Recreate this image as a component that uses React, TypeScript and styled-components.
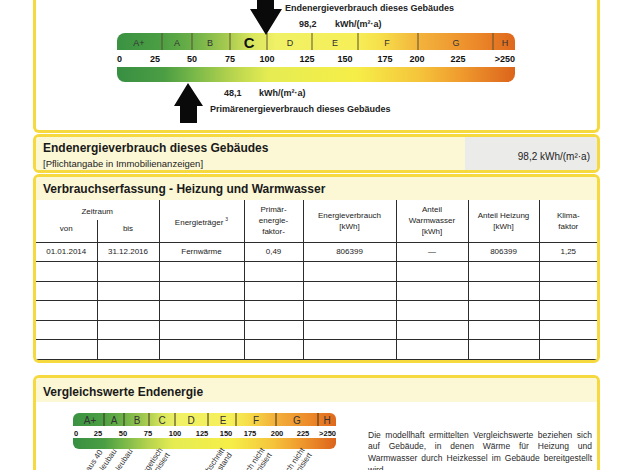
import React from "react";
import styled, { createGlobalStyle } from "styled-components";

const GlobalStyle = createGlobalStyle`
  html, body {
    margin: 0;
    padding: 0;
    width: 626px;
    height: 470px;
    overflow: hidden;
    background: #ffffff;
  }
  body {
    font-family: "Liberation Sans", Arial, Helvetica, sans-serif;
    color: #1e1e1e;
  }
`;

const YELLOW = "#f6d93e";
const CREAM = "#fcf8d6";
const LINE = "#2c2c2c";

const Page = styled.div`
  width: 567px;
  margin-left: 33px;
  display: flex;
  flex-direction: column;
`;

const Panel = styled.section<{ $open?: boolean; $gap?: number }>`
  border: 3px solid ${YELLOW};
  border-top-width: ${(p) => (p.$open ? 0 : 3)}px;
  border-radius: ${(p) => (p.$open ? "0 0 6px 6px" : "6px")};
  margin-top: ${(p) => p.$gap ?? 1}px;
  overflow: hidden;
  background: #ffffff;
`;

const ChartSvg = styled.svg`
  display: block;
  font-family: "Liberation Sans", Arial, Helvetica, sans-serif;
`;

const PanelHeader = styled.header<{ $padTop?: number }>`
  height: ${(p) => 23 - (p.$padTop ?? 0) + (p.$padTop ? 1 : 0)}px;
  padding-top: ${(p) => p.$padTop ?? 0}px;
  background: ${CREAM};
  display: flex;
  align-items: center;
  padding-left: 7px;
`;

const Title = styled.h2`
  margin: 0;
  font-size: 12px;
  line-height: 14px;
  font-weight: bold;
  color: #1a1a1a;
`;

const SummaryRow = styled.div`
  display: flex;
  height: 33px;
`;

const SummaryText = styled.div`
  flex: 1;
  background: ${CREAM};
  padding: 4px 7px 0;
  display: flex;
  flex-direction: column;
  gap: 3px;
`;

const Note = styled.div`
  font-size: 9.5px;
  line-height: 12px;
  color: #222;
`;

const SummaryValue = styled.div`
  width: 132px;
  background: #ebebea;
  display: flex;
  align-items: center;
  justify-content: flex-end;
  padding: 5px 7px 0 0;
  box-sizing: border-box;
  font-size: 10px;
  color: #222;
`;

const Table = styled.table`
  width: 561px;
  border-collapse: collapse;
  table-layout: fixed;
  font-size: 8px;
  line-height: 11px;
  color: #222;
`;

const Col = styled.col<{ $w: number }>`
  width: ${(p) => p.$w}px;
`;

const Th = styled.th<{ $open?: boolean; $top?: number; $first?: boolean }>`
  font-weight: normal;
  text-align: center;
  vertical-align: ${(p) => (p.$top !== undefined ? "top" : "middle")};
  padding: ${(p) => (p.$top !== undefined ? `${p.$top}px 2px 0` : "0 2px")};
  border-left: ${(p) => (p.$first ? "none" : `1px solid ${LINE}`)};
  border-bottom: ${(p) => (p.$open ? "none" : `1px solid ${LINE}`)};
`;

const HeadRow = styled.tr<{ $h: number }>`
  height: ${(p) => p.$h}px;
`;

const BodyRow = styled.tr`
  height: 19.5px;
`;

const Td = styled.td<{ $first?: boolean }>`
  text-align: center;
  vertical-align: middle;
  padding: 0 2px;
  border-left: ${(p) => (p.$first ? "none" : `1px solid ${LINE}`)};
  border-bottom: 1px solid ${LINE};
`;

const Sup = styled.sup`
  font-size: 5px;
  vertical-align: 4px;
  margin-left: 2px;
`;

const CompareBody = styled.div`
  display: flex;
  height: 80px;
`;

const Paragraph = styled.p`
  margin: 0 0 0 18px;
  padding-top: 28px;
  width: 224px;
  font-size: 8.5px;
  line-height: 11.7px;
  text-align: justify;
  color: #2a2a2a;
`;

/* ---------- energy scale drawing ---------- */

type ScaleProps = {
  id: string;
  x0: number;
  x1: number;
  barY: number;
  barH: number;
  lowY: number;
  lowH: number;
  r: number;
  dividers: number[];
  divColor: string;
  letters: [string, number][];
  big?: string;
  letterY: number;
  letterSize: number;
  numbers: [string, number][];
  numY: number;
  numSize: number;
};

const topStops: [number, string][] = [
  [0, "#3a9242"],
  [0.11, "#4b9e43"],
  [0.19, "#6cb048"],
  [0.28, "#a9cb50"],
  [0.34, "#d9e65e"],
  [0.4, "#f0f166"],
  [0.6, "#f6ef58"],
  [0.66, "#f6e04b"],
  [0.76, "#f3b33c"],
  [0.9, "#ec8a2a"],
  [1, "#df681d"],
];

const lowStops: [number, string][] = [
  [0, "#378f42"],
  [0.12, "#4c9e43"],
  [0.19, "#76b749"],
  [0.29, "#b7d44e"],
  [0.38, "#e5ec52"],
  [0.6, "#f6ee48"],
  [0.76, "#f5c43b"],
  [0.86, "#f09c2e"],
  [1, "#dc641c"],
];

function EnergyScale(p: ScaleProps) {
  const { x0, x1, barY, barH, lowY, lowH, r } = p;
  const top = `M${x0},${barY + barH} V${barY + r} A${r},${r} 0 0 1 ${x0 + r},${barY} H${x1 - r} A${r},${r} 0 0 1 ${x1},${barY + r} V${barY + barH} Z`;
  const low = `M${x0},${lowY} H${x1} V${lowY + lowH - r} A${r},${r} 0 0 1 ${x1 - r},${lowY + lowH} H${x0 + r} A${r},${r} 0 0 1 ${x0},${lowY + lowH - r} Z`;
  return (
    <g>
      <defs>
        <linearGradient id={`${p.id}-top`} x1="0" y1="0" x2="1" y2="0">
          {topStops.map(([o, c]) => (
            <stop key={o} offset={o} stopColor={c} />
          ))}
        </linearGradient>
        <linearGradient id={`${p.id}-low`} x1="0" y1="0" x2="1" y2="0">
          {lowStops.map(([o, c]) => (
            <stop key={o} offset={o} stopColor={c} />
          ))}
        </linearGradient>
      </defs>
      <path d={top} fill={`url(#${p.id}-top)`} />
      <path d={low} fill={`url(#${p.id}-low)`} />
      {p.dividers.map((x) => (
        <line key={x} x1={x} x2={x} y1={barY} y2={barY + barH} stroke={p.divColor} strokeWidth={1} />
      ))}
      {p.letters.map(([t, x]) =>
        t === p.big ? (
          <text key={t} x={x} y={p.letterY + 1.5} textAnchor="middle" fontSize={p.letterSize * 1.65} fontWeight="bold" fill="#111">
            {t}
          </text>
        ) : (
          <text key={t} x={x} y={p.letterY} textAnchor="middle" fontSize={p.letterSize} fill="#333">
            {t}
          </text>
        )
      )}
      {p.numbers.map(([t, x], i) => (
        <text
          key={t}
          x={x}
          y={p.numY}
          textAnchor={i === 0 ? "start" : i === p.numbers.length - 1 ? "end" : "middle"}
          fontSize={p.numSize}
          fontWeight="bold"
          fill="#111"
        >
          {t}
        </text>
      ))}
    </g>
  );
}

const Label = ({ x, y, lines }: { x: number; y: number; lines: string[] }) => (
  <text transform={`translate(${x},${y}) rotate(-56)`} textAnchor="end" fontSize={8} fill="#333">
    {lines.map((l, i) => (
      <tspan key={l} x={0} dy={i === 0 ? 0 : 8.6}>
        {l}
      </tspan>
    ))}
  </text>
);

const compareLabels: { x: number; y: number; lines: string[] }[] = [
  { x: 103, y: 452, lines: ["Effizienzhaus 40"] },
  { x: 117, y: 451, lines: ["MFH Neubau"] },
  { x: 133, y: 451, lines: ["EFH Neubau"] },
  { x: 163, y: 450, lines: ["EFH energetisch", "gut modernisiert"] },
  { x: 225, y: 450, lines: ["Durchschnitt", "Wohngebäudebestand"] },
  { x: 265, y: 450, lines: ["MFH energetisch nicht", "wesentlich modernisiert"] },
  { x: 305, y: 450, lines: ["EFH energetisch nicht", "wesentlich modernisiert"] },
];

const tableRows = [
  ["01.01.2014", "31.12.2016", "Fernwärme", "0,49", "806399", "—", "806399", "1,25"],
  ["", "", "", "", "", "", "", ""],
  ["", "", "", "", "", "", "", ""],
  ["", "", "", "", "", "", "", ""],
  ["", "", "", "", "", "", "", ""],
  ["", "", "", "", "", "", "", ""],
];

const colWidths = [61, 62, 85, 59, 93, 72, 71, 58];

export default function App() {
  return (
    <>
      <GlobalStyle />
      <Page>
        <Panel $open $gap={0}>
          <ChartSvg width={561} height={130} viewBox="36 0 561 130">
            <text x={285} y={10.5} fontSize={9} fontWeight="bold" fill="#222">
              Endenergieverbrauch dieses Gebäudes
            </text>
            <text x={299} y={27} fontSize={9} fontWeight="bold" fill="#222">
              98,2
            </text>
            <text x={335} y={27} fontSize={9} fontWeight="bold" fill="#222">
              kWh/(m²·a)
            </text>
            <EnergyScale
              id="main"
              x0={117}
              x1={515}
              barY={33}
              barH={17}
              lowY={67}
              lowH={15}
              r={8}
              dividers={[162, 192, 230, 267, 312, 358, 418, 493]}
              divColor="#5a5030"
              letters={[
                ["A+", 139],
                ["A", 177],
                ["B", 210],
                ["C", 249],
                ["D", 290],
                ["E", 335],
                ["F", 387],
                ["G", 456],
                ["H", 505],
              ]}
              big="C"
              letterY={46}
              letterSize={9}
              numbers={[
                ["0", 117],
                ["25", 155],
                ["50", 192],
                ["75", 230],
                ["100", 267],
                ["125", 307],
                ["150", 345],
                ["175", 385],
                ["200", 417],
                ["225", 458],
                [">250", 515],
              ]}
              numY={61.5}
              numSize={9}
            />
            <polygon points="257,0 274,0 274,9 282,9 266,35 250,9 257,9" fill="#0a0a0a" />
            <polygon points="188,83 203,106 197,106 197,123 180,123 180,106 174,106" fill="#0a0a0a" />
            <text x={224} y={96} fontSize={9} fontWeight="bold" fill="#222">
              48,1
            </text>
            <text x={259} y={96} fontSize={9} fontWeight="bold" fill="#222">
              kWh/(m²·a)
            </text>
            <text x={210} y={112} fontSize={9} fontWeight="bold" fill="#222">
              Primärenergieverbrauch dieses Gebäudes
            </text>
          </ChartSvg>
        </Panel>

        <Panel>
          <SummaryRow>
            <SummaryText>
              <Title>Endenergieverbrauch dieses Gebäudes</Title>
              <Note>[Pflichtangabe in Immobilienanzeigen]</Note>
            </SummaryText>
            <SummaryValue>98,2 kWh/(m²·a)</SummaryValue>
          </SummaryRow>
        </Panel>

        <Panel>
          <PanelHeader>
            <Title>Verbrauchserfassung - Heizung und Warmwasser</Title>
          </PanelHeader>
          <Table>
            <colgroup>
              {colWidths.map((w, i) => (
                <Col key={i} $w={w} />
              ))}
            </colgroup>
            <thead>
              <HeadRow $h={20}>
                <Th colSpan={2} $first $open $top={6}>
                  Zeitraum
                </Th>
                <Th rowSpan={2}>
                  Energieträger<Sup>3</Sup>
                </Th>
                <Th rowSpan={2}>
                  Primär-
                  <br />
                  energie-
                  <br />
                  faktor-
                </Th>
                <Th rowSpan={2}>
                  Energieverbrauch
                  <br />
                  [kWh]
                </Th>
                <Th rowSpan={2}>
                  Anteil
                  <br />
                  Warmwasser
                  <br />
                  [kWh]
                </Th>
                <Th rowSpan={2}>
                  Anteil Heizung
                  <br />
                  [kWh]
                </Th>
                <Th rowSpan={2}>
                  Klima-
                  <br />
                  faktor
                </Th>
              </HeadRow>
              <HeadRow $h={22}>
                <Th $first $top={3}>
                  von
                </Th>
                <Th $top={3}>bis</Th>
              </HeadRow>
            </thead>
            <tbody>
              {tableRows.map((row, ri) => (
                <BodyRow key={ri}>
                  {row.map((c, ci) => (
                    <Td key={ci} $first={ci === 0}>
                      {c}
                    </Td>
                  ))}
                </BodyRow>
              ))}
            </tbody>
          </Table>
        </Panel>

        <Panel $gap={12}>
          <PanelHeader $padTop={4}>
            <Title>Vergleichswerte Endenergie</Title>
          </PanelHeader>
          <CompareBody>
            <ChartSvg width={314} height={80} viewBox="36 402 314 80">
              <EnergyScale
                id="cmp"
                x0={73}
                x1={336}
                barY={413}
                barH={13}
                lowY={438}
                lowH={11}
                r={6}
                dividers={[104, 124, 149, 175, 208, 236, 276, 318]}
                divColor="#3a3020"
                letters={[
                  ["A+", 90],
                  ["A", 114],
                  ["B", 137],
                  ["C", 162],
                  ["D", 191],
                  ["E", 223],
                  ["F", 256],
                  ["G", 297],
                  ["H", 327],
                ]}
                letterY={423.5}
                letterSize={10}
                numbers={[
                  ["0", 74],
                  ["25", 98],
                  ["50", 123],
                  ["75", 148],
                  ["100", 175],
                  ["125", 202],
                  ["150", 226],
                  ["175", 250],
                  ["200", 277],
                  ["225", 303],
                  [">250", 336],
                ]}
                numY={435.8}
                numSize={7.5}
              />
              {compareLabels.map((l) => (
                <Label key={l.lines[0] + l.x} x={l.x} y={l.y} lines={l.lines} />
              ))}
            </ChartSvg>
            <Paragraph>
              Die modellhaft ermittelten Vergleichswerte beziehen sich auf Gebäude, in denen Wärme für Heizung und
              Warmwasser durch Heizkessel im Gebäude bereitgestellt wird.
            </Paragraph>
          </CompareBody>
        </Panel>
      </Page>
    </>
  );
}
